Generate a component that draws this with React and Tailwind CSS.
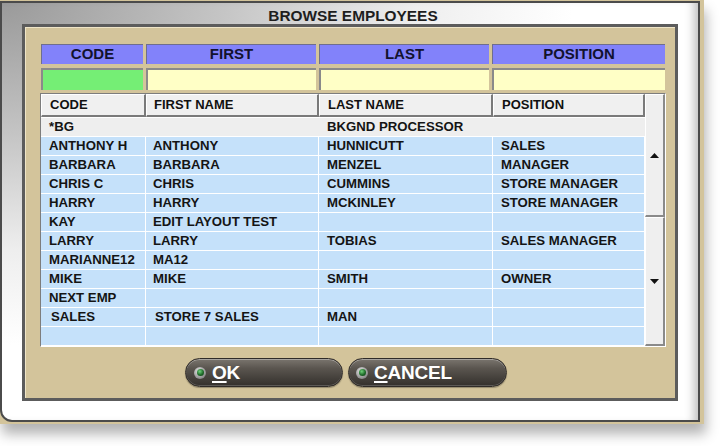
import React from 'react';

const rows = [
  ['*BG', '', 'BKGND PROCESSOR', ''],
  ['ANTHONY H', 'ANTHONY', 'HUNNICUTT', 'SALES'],
  ['BARBARA', 'BARBARA', 'MENZEL', 'MANAGER'],
  ['CHRIS C', 'CHRIS', 'CUMMINS', 'STORE MANAGER'],
  ['HARRY', 'HARRY', 'MCKINLEY', 'STORE MANAGER'],
  ['KAY', 'EDIT LAYOUT TEST', '', ''],
  ['LARRY', 'LARRY', 'TOBIAS', 'SALES MANAGER'],
  ['MARIANNE12', 'MA12', '', ''],
  ['MIKE', 'MIKE', 'SMITH', 'OWNER'],
  ['NEXT EMP', '', '', ''],
  ['SALES', 'STORE 7 SALES', 'MAN', ''],
  ['', '', '', ''],
];

const colWidths = ['w-[105px]', 'w-[173px]', 'w-[174px]', 'w-[152px]'];
const colPads = ['pl-2', 'pl-[7px]', 'pl-2', 'pl-2'];
// the SALES row sits a couple of pixels further right in its first two columns
const salesPads = ['pl-[10px]', 'pl-[9px]', 'pl-2', 'pl-2'];

function Led() {
  return (
    <span className="w-[12px] h-[12px] rounded-full bg-[radial-gradient(circle_at_40%_35%,#e4e4e4,#8d8d8d_70%,#4a4a4a)] flex items-center justify-center shrink-0">
      <span className="w-[7px] h-[7px] rounded-full bg-[radial-gradient(circle_at_40%_35%,#6fd27a,#1f6b2a_55%,#0d3314)]" />
    </span>
  );
}

function PillButton({ first, rest, width, ledPad }) {
  return (
    <button
      type="button"
      className={`${width} h-[29px] rounded-full border border-[#2f2b28] bg-[linear-gradient(180deg,#7a756e_0%,#5a554f_35%,#45413c_70%,#34302c_100%)] shadow-[inset_0_1px_0_rgba(255,255,255,0.35),inset_0_-1px_0_rgba(255,255,255,0.2),0_1px_1px_rgba(0,0,0,0.3)] flex items-center ${ledPad}`}
    >
      <Led />
      <span className="ml-[6px] text-[19px] font-bold text-white leading-none tracking-[-0.2px]">
        <span className="underline underline-offset-2 decoration-[1.5px]">{first}</span>
        {rest}
      </span>
    </button>
  );
}

export default function App() {
  return (
    <div className="w-[724px] h-[446px] bg-white overflow-hidden font-['Liberation_Sans',Arial,sans-serif]">
      <div className="w-[704px] h-[424px] bg-[#d3c49b] pt-px shadow-[2px_10px_12px_rgba(0,0,0,0.3)]">
        <div className="w-[700px] h-[421px] border-2 border-[#4b4b4b] rounded-bl-[12px] bg-[radial-gradient(ellipse_at_0%_0%,#9a9a9a_0%,#c4c4c4_22%,#eeeeee_42%,#ffffff_58%)] shadow-[inset_-10px_0_10px_-6px_rgba(0,0,0,0.25)] flex flex-col px-[20px] pb-[19px]">
          {/* Title */}
          <div className="h-[21px] pt-[5px] pl-[6px] text-center text-[15.4px] font-bold leading-[16px] text-[#1e1e1e]">
            BROWSE EMPLOYEES
          </div>

          {/* Inner panel */}
          <div className="flex-1 border-[3px] border-[#5c5c5c] bg-[#d3c49b] shadow-[inset_1px_1px_0_#efe5c8] pt-[17px] pl-[16px]">
            {/* Search header */}
            <div className="flex gap-[3px] h-[20px]">
              {[
                ['CODE', 'w-[102px]'],
                ['FIRST', 'w-[170px]'],
                ['LAST', 'w-[170px]'],
                ['POSITION', 'w-[173px]'],
              ].map(([label, w]) => (
                <div
                  key={label}
                  className={`${w} bg-[#8282fa] border-t border-l border-[#6e6e8e] flex items-center justify-center text-[15px] font-bold text-[#12122e]`}
                >
                  {label}
                </div>
              ))}
            </div>

            {/* Filter inputs */}
            <div className="flex gap-[3px] h-[22px] mt-[4px]">
              <div className="w-[102px] bg-[#75ee75] border-t-2 border-l-2 border-[#8a8a8a]" />
              <div className="w-[170px] bg-[#ffffc6] border-t-2 border-l-2 border-[#8a8a8a]" />
              <div className="w-[170px] bg-[#ffffc6] border-t-2 border-l-2 border-[#8a8a8a]" />
              <div className="w-[173px] bg-[#ffffc6] border-t-2 border-l-2 border-[#8a8a8a]" />
            </div>

            {/* Grid */}
            <div className="mt-[3px] -ml-px w-[626px] flex border border-t-[#7d7d7d] border-l-[#7d7d7d] border-b-white border-r-white">
              <div className="w-[604px] flex flex-col">
                <div className="flex h-[24px] border-b border-white">
                  {['CODE', 'FIRST NAME', 'LAST NAME', 'POSITION'].map((h, i) => (
                    <div
                      key={h}
                      className={`${colWidths[i]} ${colPads[i]} bg-[#f0f0f0] border-t border-l border-t-white border-l-white border-r-2 border-b-2 border-r-[#7a7a7a] border-b-[#7a7a7a] flex items-center text-[13px] font-bold text-[#111]`}
                    >
                      {h}
                    </div>
                  ))}
                </div>
                {rows.map((r, ri) => (
                  <div
                    key={ri}
                    className={`flex h-[19px] border-b border-white ${ri === 0 ? 'bg-[#eeeeee]' : 'bg-[#c5e1fa]'}`}
                  >
                    {r.map((c, ci) => (
                      <div
                        key={ci}
                        className={`${colWidths[ci]} ${ri === 10 ? salesPads[ci] : colPads[ci]} ${ri === 0 ? '' : 'border-r border-white'} flex items-center text-[13.2px] font-bold text-[#141414] whitespace-nowrap`}
                      >
                        {c}
                      </div>
                    ))}
                  </div>
                ))}
              </div>

              {/* Scrollbar */}
              <div className="w-[20px] flex flex-col">
                <div className="h-[123px] bg-[#efefef] border-t border-l border-white border-r-2 border-b-2 border-r-[#8a8a8a] border-b-[#8a8a8a] flex items-center justify-center">
                  <svg width="9" height="5" viewBox="0 0 9 5">
                    <path d="M0 5 L4.5 0 L9 5 Z" fill="#111" />
                  </svg>
                </div>
                <div className="flex-1 bg-[#efefef] border-t border-l border-white border-r-2 border-b-2 border-r-[#8a8a8a] border-b-[#8a8a8a] flex items-center justify-center">
                  <svg width="9" height="5" viewBox="0 0 9 5">
                    <path d="M0 0 L9 0 L4.5 5 Z" fill="#111" />
                  </svg>
                </div>
              </div>
            </div>

            {/* Buttons */}
            <div className="flex gap-[5px] mt-[11px] pl-[144px]">
              <PillButton first="O" rest="K" width="w-[158px]" ledPad="pl-[8px]" />
              <PillButton first="C" rest="ANCEL" width="w-[159px]" ledPad="pl-[7px]" />
            </div>
          </div>
        </div>
      </div>
    </div>
  );
}
